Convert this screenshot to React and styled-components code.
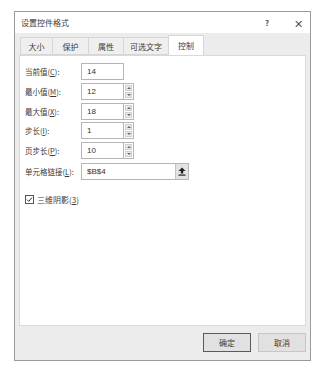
import styled, { createGlobalStyle } from 'styled-components'

const Global = createGlobalStyle`
  body{
    margin: 0;
    background: #ffffff;
    font-family: "Noto Sans CJK SC", "Noto Sans", sans-serif;
    color: #3a3a3a;
  }
`

const Dialog = styled.div`
  margin: 11px 0 0 14px;
  width: 297px;
  height: 350px;
  box-sizing: border-box;
  border: 1px solid #9a9a9a;
  background: #ececec;
  display: flex;
  flex-direction: column;
`

const TitleBar = styled.div`
  height: 21px;
  background: #fff;
  display: flex;
  align-items: center;
  padding-left: 6px;
  font-size: 8px;
  .title{ flex: 1; }
  .help{ width: 29px; font-size: 8px; font-weight: bold; color: #555; }
  .close{ width: 16px; font-size: 11px; color: #555; }
`

const TabRow = styled.div`
  display: flex;
  align-items: flex-end;
  height: 20px;
  margin-top: 2px;
  padding-left: 5px;
`

const Tab = styled.div`
  width: ${p => p.w}px;
  height: ${p => (p.active ? 20 : 18)}px;
  box-sizing: border-box;
  display: flex;
  align-items: center;
  justify-content: center;
  font-size: 8px;
  background: ${p => (p.active ? '#fff' : '#efefef')};
  border: 1px solid #d6d6d6;
  border-bottom: ${p => (p.active ? 'none' : '1px solid #d6d6d6')};
  margin-left: -1px;
  &:first-child{ margin-left: 0; }
`

const Panel = styled.div`
  margin: 0 4px;
  height: 271px;
  box-sizing: border-box;
  background: #fff;
  border: 1px solid #d9d9d9;
  padding: 7px 0 0 5px;
  display: flex;
  flex-direction: column;
  gap: 2.75px;
`

const Row = styled.div`
  display: flex;
  align-items: center;
  height: 17px;
  margin-top: ${p => p.mt || 0}px;
  label{
    width: 56px;
    font-size: 7.5px;
    white-space: nowrap;
  }
`

const Input = styled.div`
  width: ${p => p.w}px;
  height: 17px;
  box-sizing: border-box;
  border: 1px solid #b5b5b5;
  background: #fff;
  font-size: 8px;
  padding-left: 5px;
  display: flex;
  align-items: center;
  font-family: "Liberation Sans", sans-serif;
  color: #333;
`

const Spinner = styled.div`
  width: 10px;
  height: 17px;
  box-sizing: border-box;
  border: 1px solid #b5b5b5;
  border-left: none;
  display: flex;
  flex-direction: column;
  padding: 1px;
  gap: 1px;
  span{
    flex: 1;
    background: #ebebeb;
    border: 1px solid #cfcfcf;
    display: flex;
    align-items: center;
    justify-content: center;
  }
`

const LinkButton = styled.div`
  width: 12px;
  height: 15px;
  margin-left: auto;
  background: #e2e2e2;
  border-left: 1px solid #c4c4c4;
  display: flex;
  align-items: center;
  justify-content: center;
`

const Check = styled.div`
  display: flex;
  align-items: center;
  gap: 3px;
  margin-top: 11px;
  font-size: 8px;
  .box{
    width: 7px;
    height: 7px;
    border: 1px solid #555;
    display: flex;
    align-items: center;
    justify-content: center;
  }
`

const Footer = styled.div`
  display: flex;
  justify-content: flex-end;
  gap: 7px;
  padding: 7px 4px 0 0;
`

const Button = styled.div`
  width: 48px;
  height: 19px;
  box-sizing: border-box;
  background: #e1e1e1;
  border: 1px solid ${p => (p.primary ? '#5a5a5a' : '#c6c6c6')};
  display: flex;
  align-items: center;
  justify-content: center;
  font-size: 8px;
`

const Tri = ({ up }) => (
  <svg width="4" height="2" viewBox="0 0 4 2">
    <path d={up ? 'M0 2 L2 0 L4 2 Z' : 'M0 0 L2 2 L4 0 Z'} fill="#666" />
  </svg>
)

const SpinField = ({ value }) => (
  <>
    <Input w={43}>{value}</Input>
    <Spinner>
      <span><Tri up /></span>
      <span><Tri /></span>
    </Spinner>
  </>
)

function App () {
  return (
    <>
      <Global />
      <Dialog>
        <TitleBar>
          <span className='title'>设置控件格式</span>
          <span className='help'>?</span>
          <span className='close'>✕</span>
        </TitleBar>
        <TabRow>
          <Tab w={33}>大小</Tab>
          <Tab w={37}>保护</Tab>
          <Tab w={36}>属性</Tab>
          <Tab w={46}>可选文字</Tab>
          <Tab w={36} active>控制</Tab>
        </TabRow>
        <Panel>
          <Row>
            <label>当前值(<u>C</u>):</label>
            <Input w={43}>14</Input>
          </Row>
          <Row>
            <label>最小值(<u>M</u>):</label>
            <SpinField value='12' />
          </Row>
          <Row>
            <label>最大值(<u>X</u>):</label>
            <SpinField value='18' />
          </Row>
          <Row>
            <label>步长(<u>I</u>):</label>
            <SpinField value='1' />
          </Row>
          <Row>
            <label>页步长(<u>P</u>):</label>
            <SpinField value='10' />
          </Row>
          <Row mt={1}>
            <label>单元格链接(<u>L</u>):</label>
            <Input w={108}>
              $B$4
              <LinkButton>
                <svg width="8" height="9" viewBox="0 0 8 9">
                  <path d="M4 0.5 L7.5 4 L5.2 4 L5.2 6.5 L2.8 6.5 L2.8 4 L0.5 4 Z" fill="#222" />
                  <rect x="0.5" y="7.5" width="7" height="1.2" fill="#222" />
                </svg>
              </LinkButton>
            </Input>
          </Row>
          <Check>
            <span className='box'>
              <svg width="7" height="7" viewBox="0 0 7 7">
                <path d="M1 3.6 L2.8 5.4 L6 1.5" stroke="#333" strokeWidth="1" fill="none" />
              </svg>
            </span>
            <span>三维阴影(<u>3</u>)</span>
          </Check>
        </Panel>
        <Footer>
          <Button primary>确定</Button>
          <Button>取消</Button>
        </Footer>
      </Dialog>
    </>
  )
}
export default App
